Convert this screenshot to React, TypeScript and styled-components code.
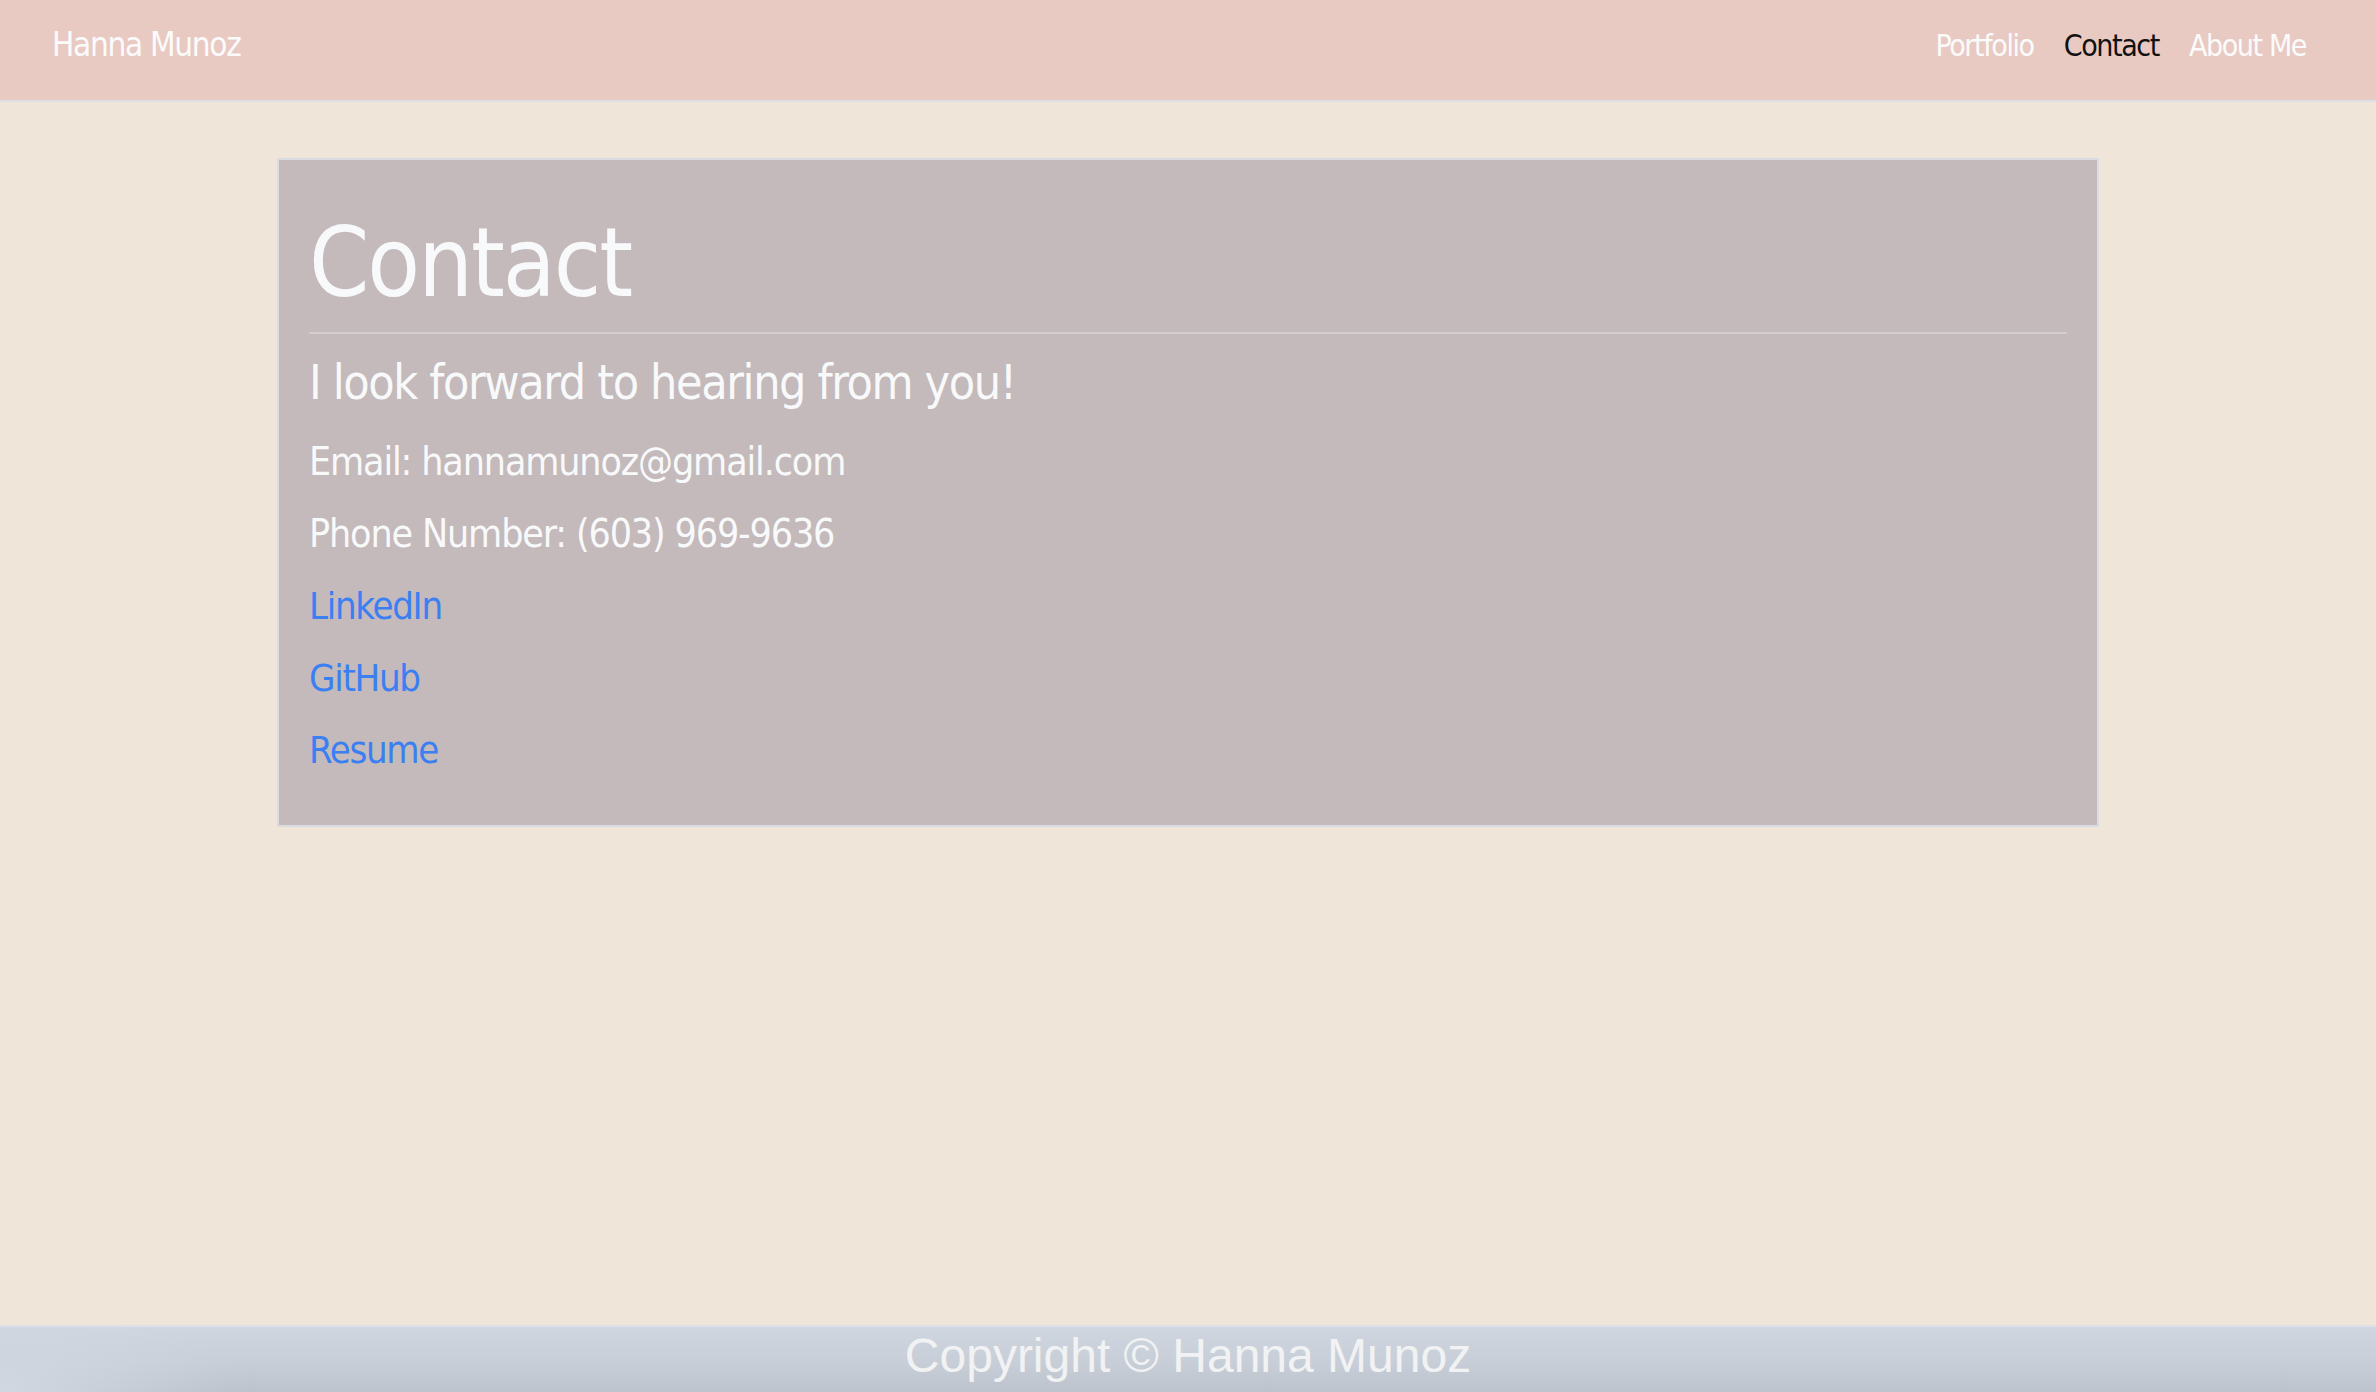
import React from "react";
import styled, { createGlobalStyle } from "styled-components";

const GlobalStyle = createGlobalStyle`
  html, body {
    margin: 0;
    padding: 0;
    background: #efe5d9;
  }
  * { box-sizing: border-box; }
`;

const hand = `"Liberation Sans Narrow", "DejaVu Sans Condensed", "Liberation Sans", sans-serif`;

const Page = styled.div`
  min-height: 100vh;
  display: flex;
  flex-direction: column;
  background: #efe5d9;
  font-family: ${hand};
`;

const Header = styled.header`
  height: 102px;
  display: flex;
  align-items: center;
  justify-content: space-between;
  padding: 0 70px 12px 52px;
  background: #e8cac3;
  border-bottom: 2px solid #dcdfe4;
`;

const Brand = styled.a`
  font-size: 33px;
  line-height: 33px;
  letter-spacing: -1.3px;
  color: #fbfbfb;
  text-decoration: none;
`;

const Nav = styled.nav`
  display: flex;
  align-items: center;
  gap: 30px;
  margin-top: 3px;
`;

const NavLink = styled.a<{ $active?: boolean }>`
  font-size: 30px;
  line-height: 30px;
  letter-spacing: -1.4px;
  color: ${(p) => (p.$active ? "#111111" : "#fbfbfb")};
  text-decoration: none;
`;

const Main = styled.main`
  flex: 1;
  display: flex;
  justify-content: center;
  align-items: flex-start;
  padding-top: 56px;
`;

const Card = styled.section`
  width: 1822px;
  background: #c4babb;
  border: 2px solid #d9dce2;
  padding: 39px 30px 39px;
  color: #f8f9fa;
`;

const Title = styled.h1`
  margin: 0;
  font-size: 96px;
  line-height: 128px;
  letter-spacing: -2px;
  font-weight: 400;
`;

const Rule = styled.hr`
  margin: 5px 0 0;
  border: 0;
  border-top: 2px solid #d3cfce;
  height: 0;
`;

const Lead = styled.h2`
  margin: 15px 0 0;
  font-size: 48px;
  line-height: 67px;
  letter-spacing: -1.4px;
  font-weight: 400;
`;

const List = styled.div`
  margin-top: 10px;
  display: flex;
  flex-direction: column;
`;

const Line = styled.p`
  margin: 0;
  font-size: 39px;
  line-height: 72px;
  letter-spacing: -1.15px;
`;

const LinkLine = styled.a`
  display: block;
  width: max-content;
  font-size: 38px;
  line-height: 72px;
  letter-spacing: -1.3px;
  color: #3b7ff2;
  text-decoration: none;
`;

const Footer = styled.footer`
  height: 67px;
  border-top: 2px solid #dde1e7;
  padding-bottom: 8px;
  background:
    radial-gradient(ellipse 240px 100px at 0% 100%, rgba(210, 217, 226, 0.95), rgba(210, 217, 226, 0) 100%),
    linear-gradient(180deg, #cfd6df 0%, #c8ced7 55%, #bcc3cc 100%);
  text-align: center;
  font-family: "Liberation Sans", Arial, sans-serif;
  font-size: 48px;
  line-height: 57px;
  color: #f1f2f3;
`;

export default function App() {
  return (
    <Page>
      <GlobalStyle />
      <Header>
        <Brand href="#">Hanna Munoz</Brand>
        <Nav>
          <NavLink href="#">Portfolio</NavLink>
          <NavLink href="#" $active>
            Contact
          </NavLink>
          <NavLink href="#">About Me</NavLink>
        </Nav>
      </Header>
      <Main>
        <Card>
          <Title>Contact</Title>
          <Rule />
          <Lead>I look forward to hearing from you!</Lead>
          <List>
            <Line>Email: hannamunoz@gmail.com</Line>
            <Line>Phone Number: (603) 969-9636</Line>
            <LinkLine href="#">LinkedIn</LinkLine>
            <LinkLine href="#">GitHub</LinkLine>
            <LinkLine href="#">Resume</LinkLine>
          </List>
        </Card>
      </Main>
      <Footer>Copyright © Hanna Munoz</Footer>
    </Page>
  );
}
